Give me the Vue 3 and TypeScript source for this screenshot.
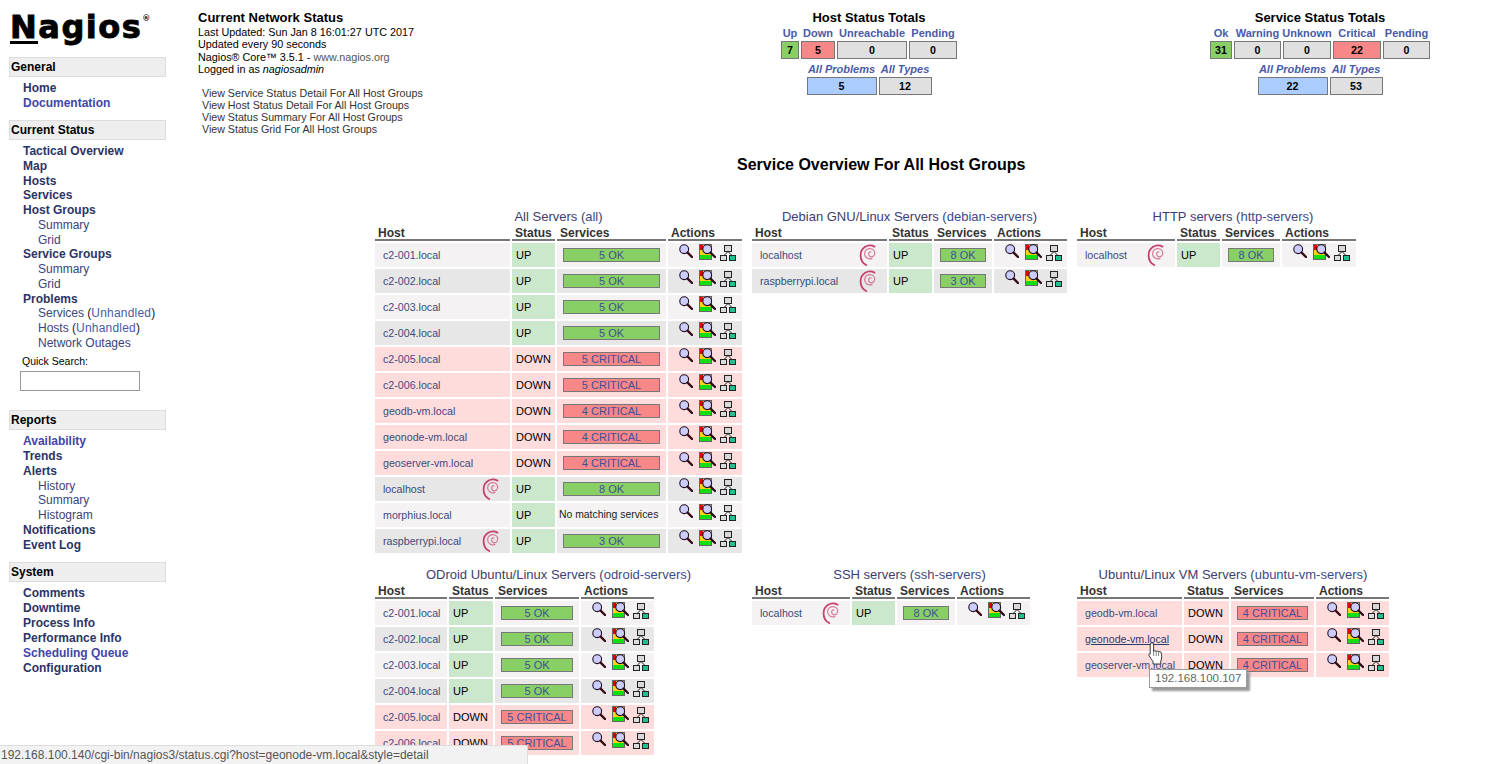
<script setup lang="ts">
interface Row {
  host: string;
  up: boolean;
  services: string;
  debian?: boolean;
  hover?: boolean;
}

interface Group {
  title: string;
  short: string;
  cols: number[];
  rows: Row[];
}

interface NavItem {
  label: string;
  level: number;
  visited?: boolean;
  paren?: string;
}

interface NavSection {
  name: string;
  items: NavItem[];
  search?: boolean;
}

const row = (host: string, services: string, debian = false): Row => ({
  host,
  services,
  debian,
  up: !services.includes('CRITICAL'),
});

const groups: Group[] = [
  {
    title: 'All Servers',
    short: 'all',
    cols: [135, 43, 109, 74],
    rows: [
      row('c2-001.local', '5 OK'),
      row('c2-002.local', '5 OK'),
      row('c2-003.local', '5 OK'),
      row('c2-004.local', '5 OK'),
      row('c2-005.local', '5 CRITICAL'),
      row('c2-006.local', '5 CRITICAL'),
      row('geodb-vm.local', '4 CRITICAL'),
      row('geonode-vm.local', '4 CRITICAL'),
      row('geoserver-vm.local', '4 CRITICAL'),
      row('localhost', '8 OK', true),
      row('morphius.local', ''),
      row('raspberrypi.local', '3 OK', true),
    ],
  },
  {
    title: 'Debian GNU/Linux Servers',
    short: 'debian-servers',
    cols: [135, 43, 58, 73],
    rows: [row('localhost', '8 OK', true), row('raspberrypi.local', '3 OK', true)],
  },
  {
    title: 'HTTP servers',
    short: 'http-servers',
    cols: [98, 43, 58, 74],
    rows: [row('localhost', '8 OK', true)],
  },
  {
    title: 'ODroid Ubuntu/Linux Servers',
    short: 'odroid-servers',
    cols: [72, 44, 84, 73],
    rows: [
      row('c2-001.local', '5 OK'),
      row('c2-002.local', '5 OK'),
      row('c2-003.local', '5 OK'),
      row('c2-004.local', '5 OK'),
      row('c2-005.local', '5 CRITICAL'),
      row('c2-006.local', '5 CRITICAL'),
    ],
  },
  {
    title: 'SSH servers',
    short: 'ssh-servers',
    cols: [98, 43, 58, 73],
    rows: [row('localhost', '8 OK', true)],
  },
  {
    title: 'Ubuntu/Linux VM Servers',
    short: 'ubuntu-vm-servers',
    cols: [105, 45, 83, 73],
    rows: [
      row('geodb-vm.local', '4 CRITICAL'),
      { ...row('geonode-vm.local', '4 CRITICAL'), hover: true },
      row('geoserver-vm.local', '4 CRITICAL'),
    ],
  },
];

const sections: NavSection[] = [
  {
    name: 'General',
    items: [
      { label: 'Home', level: 0 },
      { label: 'Documentation', level: 0, visited: true },
    ],
  },
  {
    name: 'Current Status',
    items: [
      { label: 'Tactical Overview', level: 0 },
      { label: 'Map', level: 0 },
      { label: 'Hosts', level: 0 },
      { label: 'Services', level: 0 },
      { label: 'Host Groups', level: 0 },
      { label: 'Summary', level: 1 },
      { label: 'Grid', level: 1 },
      { label: 'Service Groups', level: 0 },
      { label: 'Summary', level: 1 },
      { label: 'Grid', level: 1 },
      { label: 'Problems', level: 0 },
      { label: 'Services', level: 1, paren: 'Unhandled' },
      { label: 'Hosts', level: 1, paren: 'Unhandled' },
      { label: 'Network Outages', level: 1 },
    ],
    search: true,
  },
  {
    name: 'Reports',
    items: [
      { label: 'Availability', level: 0, visited: true },
      { label: 'Trends', level: 0 },
      { label: 'Alerts', level: 0 },
      { label: 'History', level: 1 },
      { label: 'Summary', level: 1 },
      { label: 'Histogram', level: 1 },
      { label: 'Notifications', level: 0 },
      { label: 'Event Log', level: 0 },
    ],
  },
  {
    name: 'System',
    items: [
      { label: 'Comments', level: 0 },
      { label: 'Downtime', level: 0 },
      { label: 'Process Info', level: 0 },
      { label: 'Performance Info', level: 0 },
      { label: 'Scheduling Queue', level: 0, visited: true },
      { label: 'Configuration', level: 0 },
    ],
  },
];

const hostTotals = {
  top: [
    { label: 'Up', value: 7, width: 18, kind: 'ok' },
    { label: 'Down', value: 5, width: 34, kind: 'bad' },
    { label: 'Unreachable', value: 0, width: 70, kind: '' },
    { label: 'Pending', value: 0, width: 48, kind: '' },
  ],
  bottom: [
    { label: 'All Problems', value: 5, width: 70, kind: 'blue' },
    { label: 'All Types', value: 12, width: 53, kind: '' },
  ],
};

const serviceTotals = {
  top: [
    { label: 'Ok', value: 31, width: 22, kind: 'ok' },
    { label: 'Warning', value: 0, width: 47, kind: '' },
    { label: 'Unknown', value: 0, width: 48, kind: '' },
    { label: 'Critical', value: 22, width: 48, kind: 'bad' },
    { label: 'Pending', value: 0, width: 47, kind: '' },
  ],
  bottom: [
    { label: 'All Problems', value: 22, width: 70, kind: 'blue' },
    { label: 'All Types', value: 53, width: 53, kind: '' },
  ],
};

const totals = [
  { title: 'Host Status Totals', data: hostTotals },
  { title: 'Service Status Totals', data: serviceTotals },
];

const viewLinks = [
  'View Service Status Detail For All Host Groups',
  'View Host Status Detail For All Host Groups',
  'View Status Summary For All Host Groups',
  'View Status Grid For All Host Groups',
];

function gridCols(cols: number[]): string {
  return cols.map((c) => `${c}px`).join(' ');
}
</script>

<template>
  <div class="page">
    <svg class="defs" width="0" height="0" aria-hidden="true">
      <symbol id="ico-find" viewBox="0 0 14 14">
        <circle cx="5.2" cy="5.2" r="4.4" fill="#ccccff" stroke="#1c1020" stroke-width="1.1" />
        <path d="M8.6 8.6 L13 13" stroke="#3a0a14" stroke-width="2.4" stroke-linecap="round" />
      </symbol>
      <symbol id="ico-status" viewBox="0 0 17 17">
        <rect x="0.5" y="0.5" width="12" height="15" fill="#ffd11a" stroke="#666" />
        <rect x="1" y="1" width="3" height="5" fill="#e00000" />
        <rect x="1" y="11" width="11" height="4" fill="#10e010" />
        <circle cx="8.2" cy="5.2" r="4.4" fill="#ccccff" stroke="#1c1020" stroke-width="1.1" />
        <path d="M11.5 8.6 L16 13" stroke="#2a0a14" stroke-width="2.3" stroke-linecap="round" />
      </symbol>
      <symbol id="ico-map" viewBox="0 0 16 16">
        <path d="M8 6.5 L3.5 11 M8 6.5 L12.5 11" stroke="#222" fill="none" />
        <rect x="4.5" y="0.5" width="7" height="6" fill="#d8d8d8" stroke="#222" />
        <rect x="0.5" y="10.5" width="6" height="5" fill="#dcdcdc" stroke="#222" />
        <rect x="9.5" y="10.5" width="6" height="5" fill="#20c090" stroke="#222" />
      </symbol>
      <symbol id="ico-debian" viewBox="0 0 18 22">
        <path
          d="M15.5 2.6 C9 -0.8 1.8 3.8 1.6 11 C1.5 15 3.6 19 7.2 21"
          fill="none"
          stroke="#c6406e"
          stroke-width="1.8"
          stroke-linecap="round"
        />
        <path
          d="M13 14.5 C9.5 16 5.5 13.5 5.6 9.5 C5.7 5.6 9.5 3.6 13 5 C16 6.3 16.6 10 14.5 12 C12.5 13.8 9.6 12.6 9.6 10 C9.6 8.6 10.8 7.6 12 8"
          fill="none"
          stroke="#cf5a84"
          stroke-width="1.2"
          stroke-linecap="round"
          opacity=".8"
        />
      </symbol>
    </svg>

    <aside class="side">
      <div class="logo"><span class="logo-n">N</span>agios<sup>®</sup></div>
      <section v-for="s in sections" :key="s.name" class="nav-section">
        <h3 class="nav-head">{{ s.name }}</h3>
        <ul class="nav-list">
          <li
            v-for="(item, i) in s.items"
            :key="i"
            :class="['nav-item', item.level ? 'nav-sub' : 'nav-main', { visited: item.visited }]"
          >
            {{ item.label }}<span v-if="item.paren" class="paren"> (<span class="unhandled">{{ item.paren }}</span>)</span>
          </li>
        </ul>
        <div v-if="s.search" class="search">
          <label class="search-label">Quick Search:</label>
          <input class="search-box" type="text" />
        </div>
      </section>
    </aside>

    <main class="main">
      <header class="head">
        <div class="info">
          <div class="info-title">Current Network Status</div>
          <div>Last Updated: Sun Jan 8 16:01:27 UTC 2017</div>
          <div>Updated every 90 seconds</div>
          <div>Nagios® Core™ 3.5.1 - <span class="muted">www.nagios.org</span></div>
          <div>Logged in as <i>nagiosadmin</i></div>
          <ul class="view-links">
            <li v-for="l in viewLinks" :key="l">{{ l }}</li>
          </ul>
        </div>
        <div v-for="t in totals" :key="t.title" class="totals">
          <div class="totals-title">{{ t.title }}</div>
          <div class="totals-row">
            <div v-for="c in t.data.top" :key="c.label" class="total" :style="{ width: c.width + 'px' }">
              <span class="total-label">{{ c.label }}</span>
              <span :class="['total-box', c.kind]">{{ c.value }}</span>
            </div>
          </div>
          <div class="totals-row second">
            <div v-for="c in t.data.bottom" :key="c.label" class="total" :style="{ width: c.width + 'px' }">
              <span class="total-label em">{{ c.label }}</span>
              <span :class="['total-box', c.kind]">{{ c.value }}</span>
            </div>
          </div>
        </div>
      </header>

      <h1 class="page-title">Service Overview For All Host Groups</h1>

      <div class="overview">
        <section v-for="g in groups" :key="g.short" class="group">
          <div class="group-title">{{ g.title }} (<span class="group-short">{{ g.short }}</span>)</div>
          <div class="grid" :style="{ gridTemplateColumns: gridCols(g.cols) }">
            <div class="th">Host</div>
            <div class="th">Status</div>
            <div class="th">Services</div>
            <div class="th">Actions</div>
            <template v-for="(r, i) in g.rows" :key="r.host">
              <div :class="['td', 'host', r.up ? (i % 2 ? 'even' : 'odd') : 'down']">
                <span :class="{ hover: r.hover }">{{ r.host }}</span>
                <svg v-if="r.debian" class="swirl"><use href="#ico-debian" /></svg>
                <template v-if="r.hover">
                  <svg class="hand" viewBox="0 0 15 23">
                    <path
                      d="M2.2 2 C2.2 .5 5.6 .5 5.6 2 V9.5 C5.8 8.4 8 8.4 8.2 9.6 C8.6 8.6 10.4 8.8 10.6 10 C11 9.2 13 9.4 13.2 10.8 C13.8 13.4 14 16.4 12.8 19 V22 H5 V19.4 C3.6 17.6 2 15.6 1 13.4 C.5 12 1.6 11.4 2.2 12 Z"
                      fill="#fff"
                      stroke="#222"
                      stroke-width=".9"
                    />
                    <path d="M5.6 9.5 V14 M8.2 9.6 V14 M10.6 10 V14" stroke="#555" stroke-width=".7" />
                  </svg>
                  <span class="tooltip">192.168.100.107</span>
                </template>
              </div>
              <div :class="['td', 'status', r.up ? 'st-up' : 'down']">{{ r.up ? 'UP' : 'DOWN' }}</div>
              <div :class="['td', 'services', r.up ? (i % 2 ? 'even' : 'odd') : 'down']">
                <span v-if="r.services" :class="['svc-bar', r.up ? 'svc-ok' : 'svc-crit']">{{ r.services }}</span>
                <span v-else class="none">No matching services</span>
              </div>
              <div :class="['td', 'actions', r.up ? (i % 2 ? 'even' : 'odd') : 'down']">
                <svg class="a-find"><use href="#ico-find" /></svg>
                <svg class="a-status"><use href="#ico-status" /></svg>
                <svg class="a-map"><use href="#ico-map" /></svg>
              </div>
            </template>
          </div>
        </section>
      </div>
    </main>

    <div class="statusbar">192.168.100.140/cgi-bin/nagios3/status.cgi?host=geonode-vm.local&amp;style=detail</div>
  </div>
</template>

<style>
html,
body {
  margin: 0;
  height: 100%;
  overflow: hidden;
  background: #fff;
}
</style>

<style scoped>
.page {
  position: relative;
  display: flex;
  width: 1492px;
  height: 764px;
  overflow: hidden;
  font-family: 'Liberation Sans', Arial, sans-serif;
  color: #000;
}

.defs {
  position: absolute;
}

/* sidebar */
.side {
  flex: none;
  width: 198px;
  box-sizing: border-box;
  padding-left: 9px;
}

.logo {
  height: 57px;
  box-sizing: border-box;
  padding-top: 5px;
  padding-left: 1px;
  font-family: 'DejaVu Sans', sans-serif;
  font-weight: 700;
  font-size: 32px;
  line-height: 44px;
  letter-spacing: 1.5px;
  color: #000;
  -webkit-text-stroke: 0.9px #000;
  white-space: nowrap;
}

.logo-n {
  border-bottom: 3px solid #000;
  display: inline-block;
  line-height: 28px;
}

.logo sup {
  font-size: 8px;
  line-height: 0;
  vertical-align: 17px;
  letter-spacing: 0;
  -webkit-text-stroke: 0;
}

.nav-section {
  width: 157px;
  padding-bottom: 9.6px;
}

.nav-head {
  margin: 0;
  height: 20px;
  box-sizing: border-box;
  padding-left: 1px;
  background: #eee;
  border: 1px solid #ddd;
  font-size: 12px;
  line-height: 18px;
  font-weight: 700;
  color: #000;
}

.nav-list {
  list-style: none;
  margin: 0;
  padding: 4px 0 0;
}

.nav-item {
  line-height: 14.75px;
  font-size: 12px;
  white-space: nowrap;
}

/* the last two blocks of the menu run on a slightly longer pitch */
.nav-section:nth-child(4) .nav-item {
  line-height: 14.85px;
}

.nav-section:nth-child(5) .nav-item {
  line-height: 15px;
}

.nav-main {
  padding-left: 14px;
  font-weight: 700;
  color: #2b3466;
}

.nav-main.visited {
  color: #4046a8;
}

.nav-sub {
  padding-left: 29px;
  color: #3d4278;
}

.paren {
  color: #222;
}

.unhandled {
  color: #4a5aa0;
  letter-spacing: 0.2px;
}

.search {
  padding: 4px 0 0 11px;
  margin-bottom: 9.8px;
}

.search-label {
  display: block;
  font-size: 10.5px;
  line-height: 13px;
  margin-left: 2px;
}

.search-box {
  display: block;
  width: 120px;
  height: 20px;
  box-sizing: border-box;
  margin-top: 3px;
  border: 1px solid #999;
  background: #fff;
  padding: 0;
}

/* main */
.main {
  flex: 1;
  min-width: 0;
}

.head {
  display: grid;
  grid-template-columns: 583px 429px auto;
  padding-top: 11px;
  height: 156px;
  box-sizing: border-box;
}

.info {
  font-size: 10.8px;
  line-height: 12.3px;
}

.info-title {
  font-size: 13px;
  font-weight: 700;
  line-height: 14px;
  margin-bottom: 1px;
}

.muted {
  color: #555;
}

.view-links {
  list-style: none;
  margin: 12px 0 0;
  padding: 0 0 0 4px;
  font-size: 10.67px;
  line-height: 12px;
  color: #333;
}

.totals {
  display: flex;
  flex-direction: column;
  align-items: center;
  width: max-content;
}

.totals-title {
  font-size: 13px;
  font-weight: 700;
  line-height: 14px;
  height: 15px;
}

.totals-row {
  display: flex;
  gap: 2px;
}

.totals-row.second {
  margin-top: 3px;
}

.total {
  display: flex;
  flex-direction: column;
  align-items: center;
}

.total-label {
  font-size: 11px;
  font-weight: 700;
  line-height: 15px;
  color: #4a5aa8;
  white-space: nowrap;
}

.total-label.em {
  font-style: italic;
}

.total-box {
  width: 100%;
  height: 18px;
  box-sizing: border-box;
  border: 1px solid #777;
  background: #e0e0e0;
  font-size: 10.67px;
  font-weight: 700;
  line-height: 16px;
  text-align: center;
}

.total-box.ok {
  background: #88d066;
}

.total-box.bad {
  background: #f88888;
}

.total-box.blue {
  background: #aaccff;
}

.page-title {
  margin: 0;
  padding-left: 539px;
  font-size: 16px;
  line-height: 18px;
  font-weight: 700;
}

.overview {
  display: grid;
  grid-template-columns: 367px 315px 312px;
  column-gap: 10px;
  grid-template-rows: 358px auto;
  margin-top: 36px;
  padding-left: 177px;
}

.group-title {
  font-size: 13px;
  line-height: 13px;
  padding-bottom: 2px;
  text-align: center;
  color: #3d3d6e;
}

.group-short {
  color: #3d4a8c;
}

.grid {
  display: grid;
  gap: 2px;
  grid-auto-rows: 24px;
  grid-template-rows: 16px;
}

.th {
  box-sizing: border-box;
  border-bottom: 2px solid #777;
  padding: 2px 0 0 3px;
  font-size: 12px;
  font-weight: 700;
  line-height: 13px;
  color: #333;
}

.td {
  font-size: 10.67px;
  line-height: 24px;
  white-space: nowrap;
}

.odd {
  background: #f4f2f2;
}

.even {
  background: #e7e7e7;
}

.down {
  background: #fedcdb;
}

.st-up {
  background: #cce8cc;
}

.host {
  position: relative;
  padding-left: 8px;
  color: #3d4a7c;
  display: flex;
  align-items: center;
  justify-content: space-between;
  padding-right: 10px;
}

.host .hover {
  color: #2b3a6b;
  text-decoration: underline;
}

.swirl {
  width: 18px;
  height: 22px;
}

.status {
  padding-left: 4px;
  font-size: 11px;
}

.services {
  padding: 5px 6px 0;
  box-sizing: border-box;
}

.svc-bar {
  display: block;
  box-sizing: border-box;
  height: 14px;
  line-height: 13px;
  max-width: 97px;
  margin: 0 auto;
  border: 1px solid #777;
  text-align: center;
  font-size: 11px;
  color: #3f4f98;
}

.svc-ok {
  background: #88d066;
}

.svc-crit {
  background: #f88888;
}

.none {
  display: block;
  margin: -5px -4px 0;
  color: #222;
  font-size: 10.4px;
}

.actions {
  position: relative;
  display: flex;
  padding: 1px 0 0 11px;
  box-sizing: border-box;
}

.a-find {
  width: 14px;
  height: 14px;
}

.a-status {
  width: 17px;
  height: 17px;
  margin-left: 6px;
}

.a-map {
  width: 16px;
  height: 16px;
  margin: 1px 0 0 4px;
}

.hand {
  position: absolute;
  left: 71px;
  top: 15px;
  width: 15px;
  height: 23px;
  z-index: 3;
}

.tooltip {
  position: absolute;
  left: 72px;
  top: 42px;
  z-index: 4;
  height: 19px;
  box-sizing: border-box;
  padding: 0 5px;
  border: 1px solid #999;
  background: #fff;
  box-shadow: 3px 3px 2px #999;
  font-size: 11.5px;
  line-height: 17px;
  color: #666;
}

.statusbar {
  position: absolute;
  left: 0;
  bottom: 0;
  z-index: 5;
  width: 528px;
  height: 19px;
  box-sizing: border-box;
  padding-left: 1px;
  background: #f2f2f2;
  border-top: 1px solid #ddd;
  border-right: 1px solid #ddd;
  border-top-right-radius: 2px;
  font-size: 12px;
  line-height: 19px;
  color: #555;
}
</style>
